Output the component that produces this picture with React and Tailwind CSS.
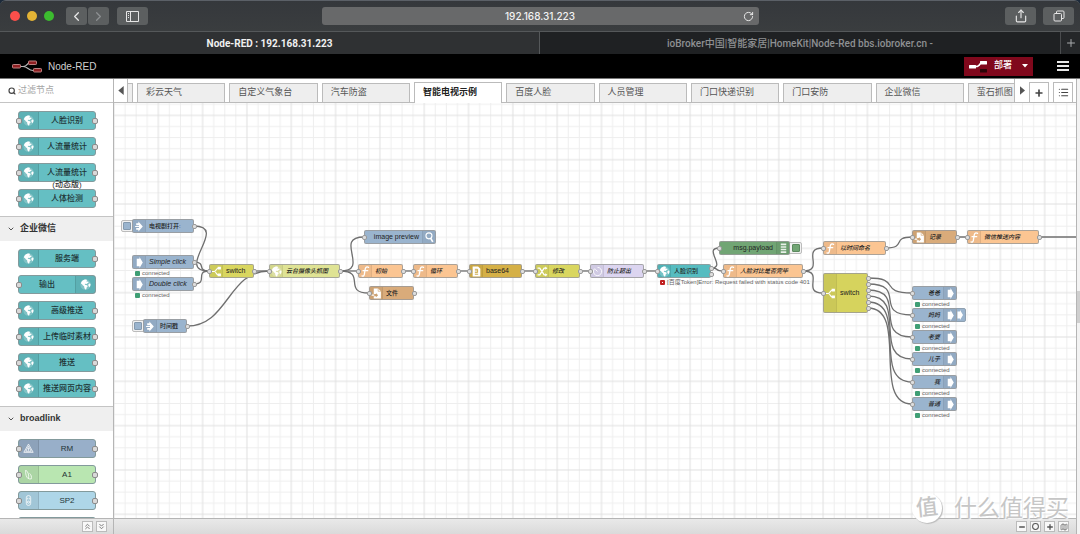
import React from "react";
import {
  ChevronLeft, ChevronRight, ChevronDown, ChevronsUp, ChevronsDown, Search, RotateCw,
  Share, Plus, Minus, Circle, List, Map as MapIcon,
} from "lucide-react";

const SANS = "font-['Liberation_Sans','Noto_Sans_CJK_SC',sans-serif]";

/* ---------- glyphs ---------- */

function Glyph({ name, className }) {
  const shapes = {
    globe: (
      <g fill="currentColor">
        <circle cx="10" cy="10" r="9.500" opacity="0.22" />
        <path d="M4 3.500C6 1.500 9 .5 11.500 1l1.500 1.500-1.500 1 1 1.500 2-.5L16 6l-2.500 1.500L12 9l-2-.5-1.500 1L10 11l3 .5 1 2-2 2-.5 3-2 .8L8 16.500 7.500 13 5 11.500 3.500 9 1.500 8C2 6 2.800 4.700 4 3.500z" />
        <path d="M16.500 8l2.500.5c.4 2.500-.5 5-2 6.500l-1.500-2.500-.5-2z" />
      </g>
    ),
    inject: <path d="M4 4h4V1l8 9-8 9v-3H4v-3.500h5v-1.500H2v-2h7V7.500H4z" fill="currentColor" />,
    arrow: <path d="M5 3h5V0l6 10-6 10v-3H5z" fill="currentColor" />,
    fn: (
      <g fill="none" stroke="currentColor" strokeWidth="2.4" strokeLinecap="round">
        <path d="M15.500 2.500c-3-2-5.500 0-6 3L8 14.500c-.5 3.500-2 4.500-4.400 3.500" />
        <path d="M5.500 8.500H14" />
      </g>
    ),
    fork: (
      <g fill="none" stroke="currentColor" strokeWidth="2">
        <path d="M1 10h5c4 0 3-6 7-6h1M6 10c4 0 3 6 7 6h1" />
        <path d="M13 2.500h4v3h-4zM13 14.500h4v3h-4z" fill="currentColor" />
      </g>
    ),
    shuffle: (
      <g fill="none" stroke="currentColor" strokeWidth="2.400">
        <path d="M1 4h4l8 12h3M1 16h4l8-12h3" />
        <path d="M15 1l4 3-4 3zM15 13l4 3-4 3z" fill="currentColor" stroke="none" />
      </g>
    ),
    file: (
      <g>
        <path d="M5 1h8l5 5v13H5v-4h4v2l4-4-4-4v2H5z" fill="currentColor" />
        <path d="M13 1v5h5" fill="none" stroke="#c99a68" strokeWidth="1" />
        <path d="M1 12h5v2H1z" fill="currentColor" />
      </g>
    ),
    sheet: (
      <g>
        <path d="M3 1h10l4 4v14H3z" fill="currentColor" />
        <path d="M7 6h5v3H7m5 0v3H7M7 15h6" fill="none" stroke="#c9a43a" strokeWidth="1.600" />
      </g>
    ),
    timer: (
      <path d="M5 4.500A7.500 7.500 0 1 0 10 2.500M10 10 6 6" fill="none" stroke="currentColor" strokeWidth="1.600" />
    ),
    lens: (
      <g fill="none" stroke="currentColor" strokeWidth="2">
        <circle cx="9" cy="7" r="5.500" />
        <path d="M12 11l4 7" strokeWidth="3" />
      </g>
    ),
    bars: <path d="M5 1h10v3H5zM5 6h10v2.500H5zM5 10.500h10V13H5zM5 15h10v3H5z" fill="currentColor" opacity="0.85" />,
    triangle: (
      <g fill="none" stroke="currentColor" strokeWidth="1.400">
        <path d="M10 2 18.500 17h-17zM10 6l5 9H5z" />
        <path d="M10 9v5" />
      </g>
    ),
    leaf: (
      <path d="M5 2c5 4 6 9 5 16-4-3-6-9-5-16zM12 8c3 3 4 6 3 10h-4" fill="none" stroke="currentColor" strokeWidth="1.400" />
    ),
    plug: (
      <g fill="none" stroke="currentColor" strokeWidth="1.400">
        <rect x="6" y="1" width="8" height="18" rx="4" />
        <circle cx="10" cy="13" r="2" />
        <path d="M8.500 5v3M11.500 5v3" />
      </g>
    ),
  };
  return (
    <svg viewBox="0 0 20 20" className={className} aria-hidden="true">
      {shapes[name]}
    </svg>
  );
}

function Logo() {
  return (
    <svg viewBox="0 0 30 14" className="h-[14px] w-[30px]" aria-hidden="true">
      <path d="M9 7.500h2c5 0 4-4.500 8-4.500M11 7.500c5 0 5 4 10 4" fill="none" stroke="#b9b9b9" strokeWidth="1.200" />
      <g fill="#8f1f22" stroke="#c98f8f" strokeWidth="0.900">
        <rect x="0.500" y="5.500" width="8" height="3.500" rx="0.800" />
        <rect x="16.500" y="2" width="8" height="3.500" rx="0.800" />
        <rect x="21.500" y="9.500" width="8" height="3.500" rx="0.800" />
      </g>
    </svg>
  );
}

/* ---------- browser window ---------- */

function BrowserBar() {
  const btn = "flex h-[18px] items-center justify-center rounded-[3px] bg-[#5c5f60] text-[#e6e6e6]";
  return (
    <div className="grid h-[31px] shrink-0 grid-cols-[1fr_437px_1fr] items-center border-b border-[#55585a] bg-linear-to-b from-[#35383c] to-[#3a3d3f] px-[6px]">
      <div className="flex items-center pl-1">
        <div className="flex gap-[7px]">
          <span className="size-[10px] rounded-full bg-[#fb4f4b]" />
          <span className="size-[10px] rounded-full bg-[#e3b335]" />
          <span className="size-[10px] rounded-full bg-[#3cbb2f]" />
        </div>
        <button aria-label="后退" className={`${btn} ml-3 w-[21px]`}><ChevronLeft className="size-[15px]" /></button>
        <button aria-label="前进" className={`${btn} ml-px w-[21px]`}><ChevronRight className="size-[15px] text-[#8d9092]" /></button>
        <button aria-label="边栏" className={`${btn} ml-2 w-[31px]`}>
          <svg viewBox="0 0 13 11" className="h-[11px] w-[13px]" fill="none" stroke="currentColor" aria-hidden="true">
            <path d="M.5.500h12v10H.5zM4.500.5v10M2 2.500h1M2 4.500h1M2 6.500h1" />
          </svg>
        </button>
      </div>
      <div className="grid h-[18px] grid-cols-[1fr_auto_1fr] items-center rounded-[3px] bg-[#68696a] px-[5px] text-[#f2f2f2]">
        <span />
        <span className="font-['Inter',sans-serif] text-[10px] font-medium">192.168.31.223</span>
        <button aria-label="刷新" className="justify-self-end"><RotateCw className="size-[11px]" /></button>
      </div>
      <div className="flex justify-end gap-[7px]">
        <button aria-label="共享" className={`${btn} w-[31px]`}><Share className="size-[14px]" /></button>
        <button aria-label="标签页概览" className={`${btn} w-[31px]`}>
          <svg viewBox="0 0 12 12" className="size-3" fill="none" stroke="currentColor" aria-hidden="true">
            <rect x="1" y="3.500" width="7.500" height="7.500" rx="1" />
            <path d="M3.500 3.500V2a1 1 0 0 1 1-1H10a1 1 0 0 1 1 1v5.500a1 1 0 0 1-1 1H8.500" />
          </svg>
        </button>
      </div>
    </div>
  );
}

function BrowserTabs() {
  return (
    <div className="grid h-[22px] shrink-0 grid-cols-[50%_1fr_20px] font-['Roboto','Noto_Sans_CJK_SC',sans-serif] text-[10px]">
      <a href="#node-red" className="flex items-center justify-center border-r border-[#55585a] bg-[#2f3133] font-bold text-[#f0f0f0]">
        Node-RED : 192.168.31.223
      </a>
      <a href="#iobroker" className="flex items-center justify-center bg-[#1f2123] font-medium text-[#8e9092]">
        ioBroker中国|智能家居|HomeKit|Node-Red bbs.iobroker.cn -
      </a>
      <button aria-label="新标签页" className="flex items-center justify-center border-l border-[#4a4c4e] bg-[#252729] text-[#a9abad]">
        <Plus className="size-3" />
      </button>
    </div>
  );
}

/* ---------- Node-RED header ---------- */

function Header() {
  return (
    <header className="flex h-[25px] shrink-0 items-center border-b border-[#777] bg-black pr-[11px] pl-3">
      <Logo />
      <span className="ml-[6px] text-[10px] text-[#cfcfcf]">Node-RED</span>
      <button className="ml-auto flex h-[19px] items-center bg-[#80081c] pl-[5px] text-[9px] text-white">
        <svg viewBox="0 0 19 13" className="h-[13px] w-[19px]" aria-hidden="true">
          <path d="M7 6.500c5 0 3-4 6-4" fill="none" stroke="#fff" strokeWidth="1.500" />
          <rect x="0" y="5" width="7" height="3.500" rx="0.500" fill="#fff" />
          <rect x="11" y="1" width="7" height="3.500" rx="0.500" fill="#fff" />
          <rect x="11" y="9" width="7" height="3.500" rx="0.500" fill="#2b0508" />
        </svg>
        <span className="ml-[6px] font-medium">部署</span>
        <span className="ml-[5px] flex w-4 justify-center">
          <svg viewBox="0 0 6 4" className="h-1 w-[6px]" aria-hidden="true"><path d="M0 0h6L3 3.500z" fill="#fff" /></svg>
        </span>
      </button>
      <button aria-label="菜单" className="ml-6 text-[#e8e8e8]">
        <svg viewBox="0 0 12 10" className="h-[10px] w-3" aria-hidden="true">
          <path d="M0 0h12v2H0zM0 4h12v2H0zM0 8h12v2H0z" fill="currentColor" />
        </svg>
      </button>
    </header>
  );
}

/* ---------- palette ---------- */

const TEAL = "bg-[#65bfc3]";

const GROUPS = [
  {
    items: [
      { label: "人脸识别", icon: "globe", color: TEAL, in: true, out: true },
      { label: "人流量统计", icon: "globe", color: TEAL, in: true, out: true },
      { label: "人流量统计", sub: "(动态版)", icon: "globe", color: TEAL, in: true, out: true },
      { label: "人体检测", icon: "globe", color: TEAL, in: true, out: true },
    ],
  },
  {
    title: "企业微信",
    items: [
      { label: "服务端", icon: "globe", color: TEAL, out: true },
      { label: "输出", icon: "globe", color: TEAL, in: true, right: true },
      { label: "高级推送", icon: "globe", color: TEAL, in: true, out: true },
      { label: "上传临时素材", icon: "globe", color: TEAL, in: true, out: true },
      { label: "推送", icon: "globe", color: TEAL, in: true, out: true },
      { label: "推送网页内容", icon: "globe", color: TEAL, in: true, out: true },
    ],
  },
  {
    title: "broadlink",
    items: [
      { label: "RM", icon: "triangle", color: "bg-[#98afc9]", in: true, out: true },
      { label: "A1", icon: "leaf", color: "bg-[#b9e6b1]", in: true, out: true },
      { label: "SP2", icon: "plug", color: "bg-[#aed6e8]", in: true, out: true },
      { label: "", icon: "globe", color: "bg-[#3f9c9c]", in: true, out: true },
    ],
  },
];

function PaletteNode({ item }) {
  const port = "absolute top-[6px] size-[6px] rounded-[2px] border border-[#8b8b8b] bg-[#d9d9d9]";
  return (
    <li className={`relative flex h-[19px] w-[78px] rounded-[3px] border border-[#839a9c] ${item.color} ${item.right ? "flex-row-reverse" : ""}`}>
      <span className={`flex w-5 shrink-0 items-center justify-center bg-black/7 text-white ${item.right ? "border-l" : "border-r"} border-black/10`}>
        <Glyph name={item.icon} className="size-[11px]" />
      </span>
      <span className="flex flex-1 flex-col items-center text-[8px] leading-[17px] font-medium whitespace-nowrap text-[#1f3436]">
        {item.label}
        {item.sub && <span className="leading-2 text-[#333]">{item.sub}</span>}
      </span>
      {item.in && <span className={`${port} -left-[3px]`} />}
      {item.out && <span className={`${port} -right-[3px]`} />}
    </li>
  );
}

function Palette() {
  const b = "flex size-[11px] items-center justify-center border border-[#bbb] bg-[#f8f8f8] text-[#777]";
  return (
    <aside className="flex w-[114px] shrink-0 flex-col border-r border-[#b5b5b5] bg-white">
      <label className="flex h-6 shrink-0 items-center gap-[2px] border-b border-[#c4c4c4] pl-2 text-[#444]">
        <Search className="size-[8px] shrink-0" strokeWidth={3.5} />
        <input aria-label="过滤节点" placeholder="过滤节点" className="w-full min-w-0 text-[9px] outline-none placeholder:text-[#a5a5a5]" />
      </label>
      <div className="min-h-0 flex-1 overflow-hidden">
        {GROUPS.map((g, i) => (
          <section key={i}>
            {g.title && (
              <h3 className="flex h-[25px] items-center gap-[5px] border-t border-[#c4c4c4] bg-[#efefef] pl-[7px] text-[9px] font-bold text-[#333]">
                <ChevronDown className="size-2" strokeWidth={2.5} />
                {g.title}
              </h3>
            )}
            <ul className="flex flex-col gap-[7px] py-2 pl-[18px]">
              {g.items.map((it, j) => <PaletteNode key={j} item={it} />)}
            </ul>
          </section>
        ))}
      </div>
      <div className="flex h-4 shrink-0 items-center justify-end gap-[3px] border-t border-[#b5b5b5] bg-linear-to-b from-[#e9e9e9] to-[#dadada] pr-[6px]">
        <button aria-label="全部折叠" className={b}><ChevronsUp className="size-[9px]" strokeWidth={2.5} /></button>
        <button aria-label="全部展开" className={b}><ChevronsDown className="size-[9px]" strokeWidth={2.5} /></button>
      </div>
    </aside>
  );
}

/* ---------- workspace ---------- */

const TABS = ["彩云天气", "自定义气象台", "汽车防盗", "智能电视示例", "百度人脸", "人员管理", "门口快递识别", "门口安防", "企业微信", "萤石抓图"];

function WorkspaceTabs() {
  const square = "mt-[3px] flex w-5 items-center justify-center border border-b-0 border-[#bbb] bg-white text-[#444]";
  return (
    <div className="flex h-6 shrink-0 border-b border-[#bbb] bg-white">
      <button aria-label="向左滚动" className="flex w-[14px] items-start justify-center border-r border-[#bbb] pt-[7px]">
        <svg viewBox="0 0 6 10" className="h-[9px] w-[6px]" aria-hidden="true"><path d="M6 0v10L0 5z" fill="#555" /></svg>
      </button>
      <span className="mt-1 w-[5px] border-t border-r border-[#bbb] bg-[#eee]" />
      <nav className="grid min-w-0 flex-1 grid-cols-[repeat(9,minmax(0,2fr))_minmax(0,1fr)] pl-1">
        {TABS.map((t, i) => {
          const on = t === "智能电视示例";
          const last = i === TABS.length - 1;
          return (
            <div key={t} className={`flex min-w-0 ${last ? "" : "pr-1"} ${on ? "-mb-px pt-[3px]" : "pt-1"}`}>
              <a
                href={`#tab-${i}`}
                className={`flex min-w-0 flex-1 items-center overflow-hidden border-t border-l border-[#bbb] pl-2 text-[9px] whitespace-nowrap ${last ? "" : "border-r"} ${on ? "bg-white font-bold text-[#222]" : "bg-[#eee] text-[#555]"}`}
              >
                {t}
              </a>
            </div>
          );
        })}
      </nav>
      <button aria-label="向右滚动" className="flex w-[15px] justify-center border-l border-[#bbb] pt-[7px]">
        <svg viewBox="0 0 6 10" className="h-[9px] w-[5px]" aria-hidden="true"><path d="M0 0v10l6-5z" fill="#555" /></svg>
      </button>
      <button aria-label="添加流程" className={square}><Plus className="size-[10px]" strokeWidth={4} /></button>
      <button aria-label="流程列表" className={`${square} mr-[3px] ml-1`}><List className="size-[11px]" strokeWidth={2.5} /></button>
    </div>
  );
}

const BLUE = "bg-[#9ab4ce]";
const PEACH = "bg-[#fbc592]";
const FILE = "bg-[#d9ab7a]";
const LIME = "bg-[#d9d65f]";

/* x, y: left edge and vertical centre in window space; w: width */
const NODES = [
  { x: 132, y: 226, w: 62, label: "电视剧打开:", icon: "inject", color: BLUE, out: 1, button: "left" },
  { x: 132, y: 262, w: 62, label: "Simple click", latin: true, italic: true, icon: "arrow", color: BLUE, out: 1, status: "connected" },
  { x: 132, y: 284, w: 62, label: "Double click", latin: true, italic: true, icon: "arrow", color: BLUE, out: 1, status: "connected" },
  { x: 143, y: 326, w: 44, label: "时间戳", icon: "inject", color: BLUE, out: 1, button: "left" },
  { x: 209, y: 271, w: 45, label: "switch", latin: true, icon: "fork", color: LIME, in: true, out: 1 },
  { x: 269, y: 271, w: 71, label: "云台摄像头抓图", italic: true, icon: "globe", color: "bg-[#dfe394]", in: true, out: 1 },
  { x: 364, y: 237, w: 72, label: "image preview", latin: true, icon: "lens", color: BLUE, in: true, right: true },
  { x: 358, y: 271, w: 45, label: "初始", italic: true, icon: "fn", color: PEACH, in: true, out: 1 },
  { x: 369, y: 293, w: 45, label: "文件", icon: "file", color: FILE, in: true, out: 1 },
  { x: 413, y: 271, w: 45, label: "循环", italic: true, icon: "fn", color: PEACH, in: true, out: 1 },
  { x: 469, y: 271, w: 53, label: "base64", latin: true, icon: "sheet", color: "bg-[#d5b046]", in: true, out: 1 },
  { x: 535, y: 271, w: 45, label: "修改", italic: true, icon: "shuffle", color: LIME, in: true, out: 1 },
  { x: 590, y: 271, w: 54, label: "防止超出", italic: true, icon: "timer", color: "bg-[#dcd5f0]", in: true, out: 1 },
  { x: 657, y: 271, w: 54, label: "人脸识别", icon: "globe", color: "bg-[#56bcc0]", in: true, out: 2, error: "[百度Token]Error: Request failed with status code 401" },
  { x: 719, y: 248, w: 71, label: "msg.payload", latin: true, icon: "bars", color: "bg-[#71a574]", in: true, right: true, button: "right" },
  { x: 723, y: 271, w: 80, label: "人脸对比是否完毕", italic: true, icon: "fn", color: PEACH, in: true, out: 1 },
  { x: 823, y: 248, w: 63, label: "以时间命名", italic: true, icon: "fn", color: PEACH, in: true, out: 1 },
  { x: 823, y: 293, w: 45, tall: true, label: "switch", latin: true, icon: "fork", color: "bg-[#d6d35d]", in: true, out: 6 },
  { x: 912, y: 237, w: 45, label: "记录", italic: true, icon: "file", color: FILE, in: true, out: 1 },
  { x: 967, y: 237, w: 72, label: "微信推送内容", italic: true, icon: "fn", color: PEACH, in: true, out: 1 },
  { x: 912, y: 293, w: 45, label: "爸爸", italic: true, icon: "arrow", color: BLUE, in: true, right: true, status: "connected" },
  { x: 912, y: 315, w: 45, label: "妈妈", italic: true, icon: "arrow", color: BLUE, in: true, right: true, extra: true, status: "connected" },
  { x: 912, y: 337, w: 45, label: "老婆", italic: true, icon: "arrow", color: BLUE, in: true, right: true, status: "connected" },
  { x: 912, y: 359, w: 45, label: "儿子", italic: true, icon: "arrow", color: BLUE, in: true, right: true, status: "connected" },
  { x: 912, y: 382, w: 45, label: "我", italic: true, icon: "arrow", color: BLUE, in: true, right: true, status: "connected" },
  { x: 912, y: 404, w: 45, label: "普通", italic: true, icon: "arrow", color: BLUE, in: true, right: true, status: "connected" },
];

const WIRES = [
  [194, 226, 209, 271], [194, 262, 209, 271], [194, 284, 209, 271], [187, 326, 269, 271],
  [254, 271, 269, 271], [340, 271, 364, 237], [340, 271, 358, 271], [340, 271, 369, 293],
  [403, 271, 413, 271], [458, 271, 469, 271], [522, 271, 535, 271], [580, 271, 590, 271],
  [644, 271, 657, 271], [711, 268, 719, 248], [711, 268, 723, 271],
  [803, 271, 823, 248], [803, 271, 823, 293], [886, 248, 912, 237], [957, 237, 967, 237],
  [1039, 237, 1090, 237],
  [868, 278, 912, 293], [868, 284, 912, 315], [868, 290, 912, 337],
  [868, 296, 912, 359], [868, 302, 912, 382], [868, 308, 912, 404],
];

const ORIGIN = { x: 114, y: 103 };
const NODE_WIDTH = 55;

function wirePath([x1, y1, x2, y2]) {
  const reach = 0.75 * Math.min(NODE_WIDTH, Math.hypot(x2 - x1, y2 - y1));
  return `M${x1} ${y1}C${x1 + reach} ${y1} ${x2 - reach} ${y2} ${x2} ${y2}`;
}

function FlowNode({ n }) {
  const height = n.tall ? 40 : 14;
  const port = "size-[5px] rounded-[2px] border border-[#999] bg-[#dedede]";
  return (
    <div
      className="absolute"
      style={{ left: n.x - ORIGIN.x, top: n.y - ORIGIN.y - height / 2, width: n.w, height }}
    >
      {n.button === "left" && (
        <button aria-label={`触发 ${n.label}`} className="absolute top-px -left-[11px] flex h-3 w-[14px] items-center rounded-[2px] border border-[#bbb] bg-[#f2f2f2] pl-px">
          <span className="size-2 rounded-[1px] border border-[#8499ad] bg-[#9ab4ce]" />
        </button>
      )}
      {n.button === "right" && (
        <button aria-label={`切换 ${n.label}`} className="absolute top-px -right-[12px] flex h-3 w-[14px] items-center justify-end rounded-[2px] border border-[#bbb] bg-[#f2f2f2] pr-px">
          <span className="size-2 rounded-[1px] border border-[#5c8a5f] bg-[#71a574]" />
        </button>
      )}
      {n.extra && (
        <span className={`absolute top-0 -right-[9px] flex h-full w-3 items-center justify-end rounded-[2px] border border-[#8fa0b0] text-white ${BLUE}`}>
          <Glyph name="arrow" className="size-[10px]" />
        </span>
      )}
      <div className={`relative flex h-full overflow-hidden rounded-[2px] border border-[#999]/80 ${n.color} ${n.right ? "flex-row-reverse" : ""}`}>
        <span className={`flex w-[13px] shrink-0 items-center justify-center bg-black/5 text-white ${n.right ? "border-l" : "border-r"} border-black/5`}>
          <Glyph name={n.icon} className="size-[11px]" />
        </span>
        <span className={`flex flex-1 items-center px-[3px] font-medium whitespace-nowrap text-[#222] ${n.right ? "justify-end" : ""} ${n.latin ? "text-[7px]" : "text-[6px]"} ${n.italic ? "italic" : ""}`}>
          {n.label}
        </span>
      </div>
      {n.in && <span className="absolute inset-y-0 -left-[2px] flex items-center"><span className={port} /></span>}
      {n.out && (
        <span className="absolute inset-y-0 -right-[3px] flex flex-col items-center justify-center gap-px">
          {Array.from({ length: n.out }, (_, i) => <span key={i} className={port} />)}
        </span>
      )}
      {(n.status || n.error) && (
        <div className="absolute top-full left-[3px] flex h-2 items-center gap-[2px] text-[6px] leading-2 whitespace-nowrap text-[#666]">
          <span className={`size-[5px] rounded-[1px] ${n.error ? "border-2 border-[#c02020]" : "bg-[#3f9e74]"}`} />
          {n.status || n.error}
        </div>
      )}
    </div>
  );
}

function Canvas() {
  return (
    <main className="relative min-h-0 flex-1 overflow-hidden bg-white">
      <svg className="absolute inset-0 size-full" aria-hidden="true">
        <defs>
          <pattern id="grid" width="80" height="80" patternUnits="userSpaceOnUse" patternTransform="translate(44.300 12.400) scale(0.554)">
            <path d="M20 0v80M40 0v80M60 0v80M0 20h80M0 40h80M0 60h80" stroke="#eeeeee" strokeWidth="1.800" />
            <path d="M0 0v80M80 0v80M0 0h80M0 80h80" stroke="#e0e0e0" strokeWidth="1.800" />
          </pattern>
        </defs>
        <rect width="100%" height="100%" fill="url(#grid)" />
        <g transform={`translate(${-ORIGIN.x} ${-ORIGIN.y})`} fill="none" stroke="#6f6f6f" strokeWidth="1.300">
          {WIRES.map((w, i) => <path key={i} d={wirePath(w)} />)}
        </g>
      </svg>
      {NODES.map((n, i) => <FlowNode key={i} n={n} />)}
    </main>
  );
}

function WorkspaceFooter() {
  const b = "flex size-[11px] items-center justify-center border border-[#bbb] bg-[#f8f8f8] text-[#555]";
  return (
    <footer className="flex h-4 shrink-0 items-center justify-end gap-[3px] border-t border-[#b5b5b5] bg-linear-to-b from-[#e9e9e9] to-[#dadada] pr-[7px]">
      <button aria-label="缩小" className={b}><Minus className="size-2" strokeWidth={4} /></button>
      <button aria-label="重置缩放" className={b}><Circle className="size-[7px]" strokeWidth={3.5} /></button>
      <button aria-label="放大" className={b}><Plus className="size-2" strokeWidth={4} /></button>
      <button aria-label="导航器" className={b}><MapIcon className="size-2" /></button>
    </footer>
  );
}

function Watermark() {
  return (
    <div className="pointer-events-none absolute right-[11px] bottom-[10px] flex items-center gap-3 text-[#c6c6c6] [text-shadow:-1px_-1px_0_#fff,1px_1px_1px_#fff]">
      <span className="flex size-[30px] items-center justify-center rounded-full bg-white text-[22px] leading-none font-medium shadow-[1px_1px_1px_#bbb]">
        <span className="-rotate-6">值</span>
      </span>
      <span className="text-[23px] leading-8">什么值得买</span>
    </div>
  );
}

export default function App() {
  return (
    <div className={`${SANS} h-screen bg-[#1d2a3a]`}>
      <div className="relative flex h-full flex-col overflow-hidden rounded-t-md border-t border-[#5b6067] bg-[#3a3d3f]">
        <BrowserBar />
        <BrowserTabs />
        <Header />
        <div className="flex min-h-0 flex-1">
          <Palette />
          <div className="flex min-w-0 flex-1 flex-col">
            <WorkspaceTabs />
            <Canvas />
            <WorkspaceFooter />
          </div>
          <div className="flex w-1 flex-col justify-center border-l border-[#b5b5b5] bg-[#f3f3f3]">
            <span className="h-8 w-full bg-[#cfcfcf]" />
          </div>
        </div>
        <Watermark />
      </div>
    </div>
  );
}
